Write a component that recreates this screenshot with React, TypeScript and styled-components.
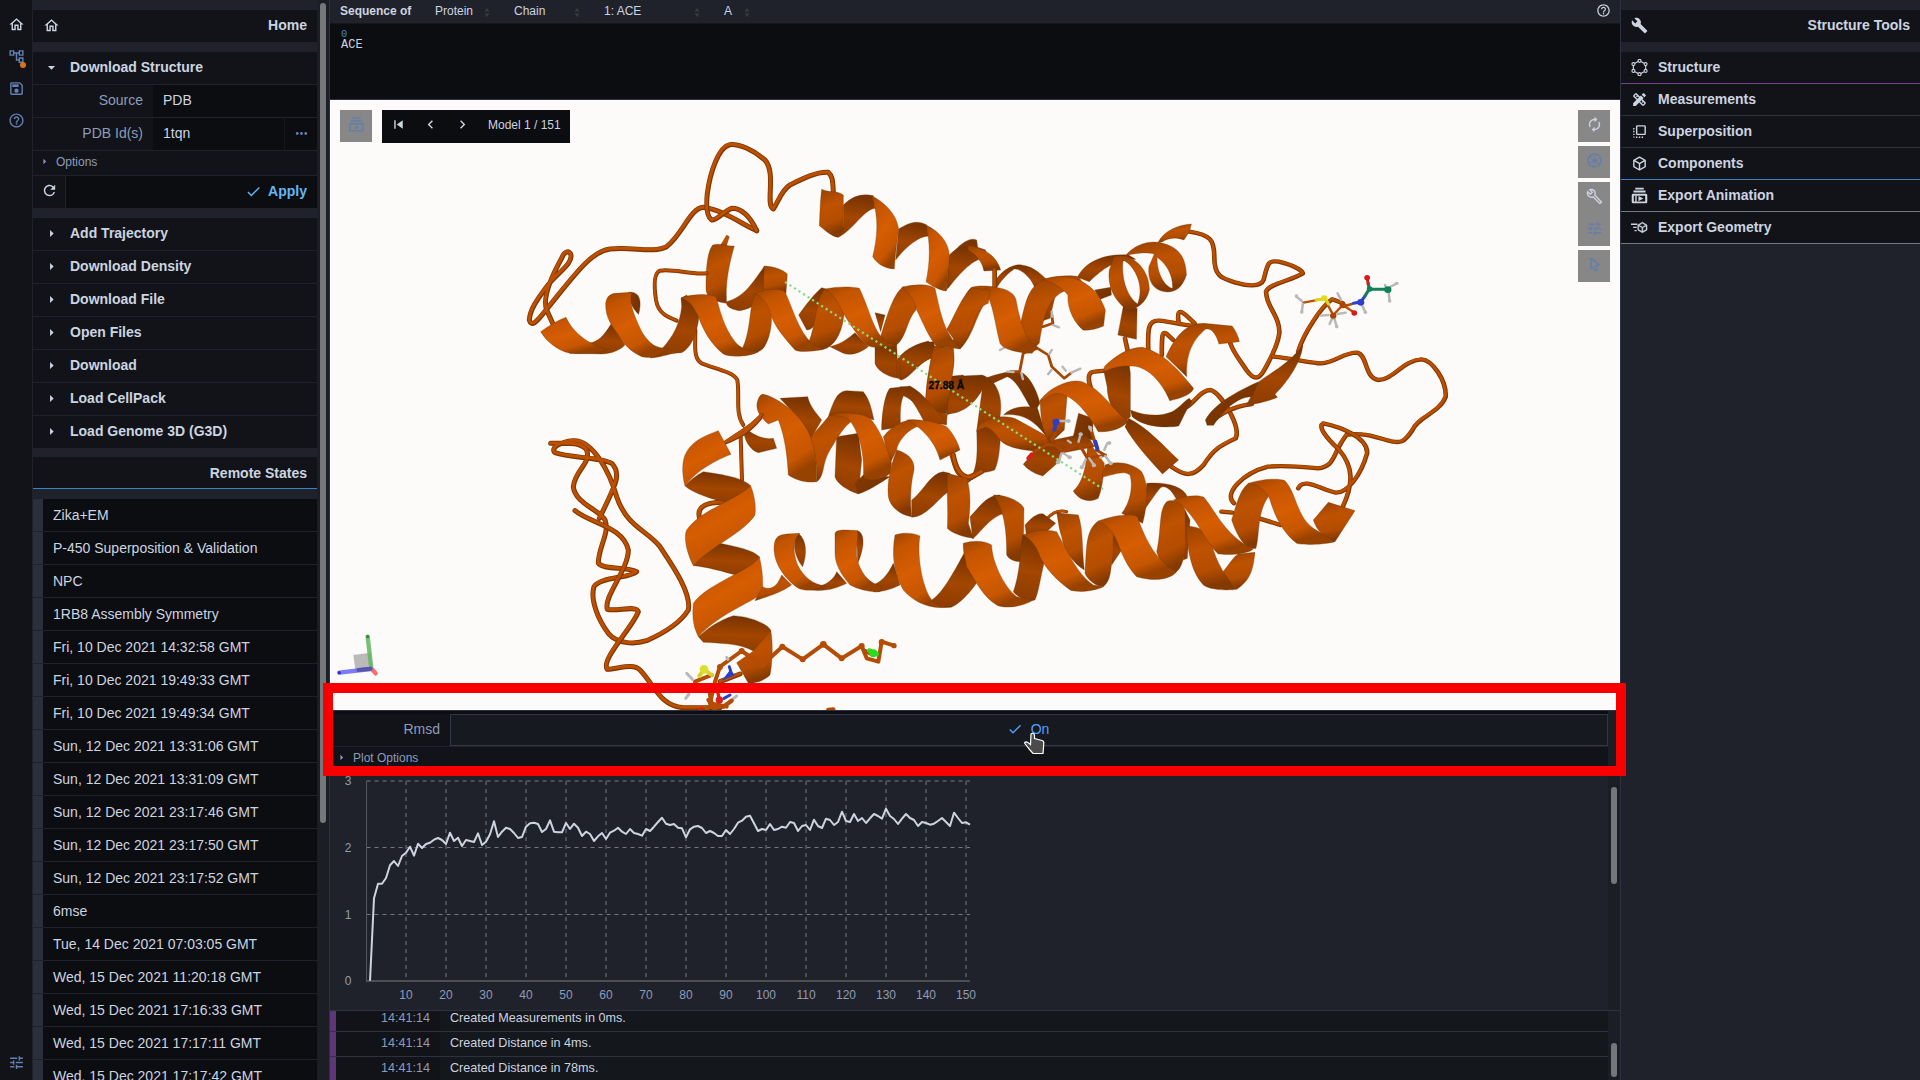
import React from "react";
import styled, { createGlobalStyle } from "styled-components";
import {
  MdOutlineHome, MdOutlineAccountTree, MdOutlineSave, MdHelpOutline, MdTune, MdArrowRight, MdArrowDropDown,
  MdMoreHoriz, MdRefresh, MdCheck, MdSkipPrevious, MdNavigateBefore, MdNavigateNext, MdAutorenew,
  MdOutlineCamera, MdBuild, MdOutlineBuild, MdOutlineSubscriptions, MdDesignServices, MdFlipToFront,
} from "react-icons/md";

const c = {
  gap: "#20222b", panel: "#111318", black: "#0c0d11", text: "#ccd4e0", muted: "#8c9cba", icon: "#6280b0",
  blue: "#51a2fb", line: "#2d3141", log: "#14171b", canvas: "#fcfbf9",
};

const Global = createGlobalStyle`
  * { box-sizing: border-box; }
  body { margin: 0; overflow: hidden; background: ${c.gap}; color: ${c.text};
    font: 14px/32px "Liberation Sans", Arial, sans-serif; }
  svg { display: block; flex: none; }
`;
const Shell = styled.div`
  position: relative; display: grid; grid-template-columns: 33px 296px 1292px 299px;
  width: 1920px; height: 1080px; overflow: hidden;
`;
const Rail = styled.nav`
  display: flex; flex-direction: column; align-items: center; padding: 8px 0 2px; background: ${c.panel};
  border-right: 1px solid ${c.gap}; color: ${c.icon}; font-size: 17px;
`;
const RailItem = styled.div<{ $active?: boolean; $last?: boolean }>`
  position: relative; display: grid; place-items: center; width: 32px; height: 32px;
  color: ${p => (p.$active ? c.text : "inherit")}; margin-top: ${p => (p.$last ? "auto" : 0)};
`;
const Dot = styled.i`
  position: absolute; right: 6px; bottom: 4px; width: 6px; height: 6px; border-radius: 50%; background: #d8741c;
`;
const Left = styled.aside`
  display: flex; height: 1080px; overflow: hidden; background: #1b1e25;
`;
const LeftBody = styled.div`width: 284px; padding-top: 10px; background: ${c.gap};`;
const LeftScroll = styled.div`padding: 3px 0 0 3px; width: 12px;`;
const Thumb = styled.div<{ $h: number }>`width: 6px; height: ${p => p.$h}px; border-radius: 3px; background: #76777b;`;
const Header = styled.header<{ $line?: string }>`
  display: flex; align-items: center; justify-content: space-between; height: 32px;
  padding: 0 10px ${p => (p.$line ? 0 : 2)}px 10px;
  margin-bottom: 10px; background: ${c.panel}; font-weight: bold; border-bottom: ${p => (p.$line ? `1px solid ${p.$line}` : 0)};
  & > span { margin-left: auto; }
`;
const Expander = styled.div`
  display: flex; align-items: center; gap: 10px; height: 32px; margin-bottom: 1px; padding: 0 0 2px 10px;
  background: ${c.panel}; font-weight: bold;
`;
const Field = styled.div`display: flex; height: 32px; margin-bottom: 1px; background: ${c.black};`;
const Label = styled.div`
  width: 120px; padding-right: 10px; text-align: right; line-height: 30px; color: ${c.muted}; background: ${c.panel};
`;
const Value = styled.div`flex: 1; padding-left: 10px; line-height: 30px;`;
const More = styled.div`
  display: grid; place-items: center; width: 33px; padding-bottom: 2px; border-left: 1px solid #15171c; color: ${c.icon};
  font-size: 17px;
`;
const OptionRow = styled.div`
  display: flex; align-items: center; gap: 5px; height: 24px; margin-bottom: 1px; padding: 0 0 3px 5px; font-size: 12px;
  background: ${c.panel}; color: ${c.muted};
`;
const ApplyRow = styled.div`
  display: flex; height: 32px; margin-bottom: 10px; background: ${c.black}; font-weight: bold; color: #64b5f6;
`;
const Reload = styled.div`
  display: grid; place-items: center; width: 33px; padding-bottom: 3px; color: ${c.text}; background: ${c.panel};
  border-right: 1px solid ${c.gap}; font-size: 17px;
`;
const ApplyButton = styled.div`
  display: flex; flex: 1; gap: 6px; align-items: center; justify-content: flex-end; padding: 0 10px 2px 0;
`;
const Group = styled.div`margin-bottom: 9px;`;
const StateRow = styled.div`
  height: 32px; margin-bottom: 1px; padding-left: 10px; line-height: 32px; border-left: 10px solid #29303c; background: ${c.black};
  & > span { display: block; height: 32px; line-height: 33px; }
`;

const Center = styled.main`
  display: grid; grid-template-rows: 24px 75px 611px 300px 70px; width: 1292px; height: 1080px;
  border-left: 1px solid ${c.line}; border-right: 1px solid ${c.line};
`;
const SeqBar = styled.div`
  display: grid; grid-template-columns: 95px 79px 90px 120px 50px 1fr; align-items: center; padding: 0 0 2px 10px; height: 24px;
  line-height: 20px; font-size: 12px; background: ${c.gap}; border-bottom: 1px solid #15171c;
`;
const Pick = styled.div`
  display: flex; align-items: center; justify-content: space-between; padding-right: 24px;
  & > svg { margin-top: 3px; }
`;
const SeqHelp = styled.div`justify-self: end; padding: 0 9px 1px 0; font-size: 15px;`;
const Sequence = styled.div`
  padding: 5px 11px; font: 12px/11px "Liberation Mono", monospace; background: ${c.black};
  & > b { display: block; font-size: 10.5px; font-weight: normal; color: #4a83c8; }
`;
const Viewport = styled.section`
  position: relative; height: 611px; overflow: hidden; background: ${c.canvas}; border-top: 1px solid ${c.line};
`;
const TopLeft = styled.div`position: absolute; left: 10px; top: 10px; display: flex; align-items: flex-start; gap: 10px;`;
const Tile = styled.div<{ $bright?: boolean }>`
  display: grid; place-items: center; width: 32px; height: 32px; background: #878787; font-size: 17px; padding-bottom: 3px;
  color: ${p => (p.$bright ? "#ccd2dc" : "#637ea9")};
`;
const Player = styled.div`
  display: flex; height: 33px; width: 188px; background: ${c.black}; font-size: 17px;
  & > span { font-size: 12px; padding-left: 10px; line-height: 31px; }
`;
const PlayerKey = styled.div`display: grid; place-items: center; width: 32px; height: 29px;`;
const TopRight = styled.div`position: absolute; right: 10px; top: 10px; display: flex; flex-direction: column; gap: 4px;`;
const Scene = styled.svg`position: absolute; left: 0; top: 0;`;

const PlotPanel = styled.section`
  display: flex; height: 300px; background: #1b1e25; border-top: 1px solid ${c.line};
`;
const PlotBody = styled.div`width: 1278px; background: ${c.gap};`;
const Rmsd = styled.div`display: flex; height: 36px; padding-top: 3px; background: ${c.black}; border-bottom: 1px solid ${c.gap};`;
const Toggle = styled.div`
  display: flex; align-items: center; justify-content: center; gap: 8px; flex: 1; padding: 0 2px 3px 0; color: ${c.blue};
  border: 1px solid #303747; background: #161920; font-size: 14px;
`;
const LogPanel = styled.section`
  display: flex; height: 70px; overflow: hidden; background: #1b1e25; border-top: 1px solid ${c.line};
`;
const LogBody = styled.div`width: 1278px; font-size: 12.6px; line-height: 22px;`;
const LogRow = styled.div<{ $cut?: boolean }>`
  display: grid; grid-template-columns: 110px 1fr; height: ${p => (p.$cut ? 21 : 25)}px; overflow: hidden;
  border-bottom: 1px solid ${c.line}; background: ${c.log};
  & > * { margin-top: ${p => (p.$cut ? -4 : 0)}px; }
`;
const Time = styled.span`
  border-left: 6px solid #5f3579; padding-right: 10px; text-align: right; color: ${c.muted}; background: ${c.panel};
`;
const Message = styled.span`padding-left: 10px;`;
const Bar = styled.div<{ $top: number }>`padding: ${p => p.$top}px 0 0 3px;`;

const Right = styled.aside`padding-top: 10px; background: ${c.gap}; font-size: 14px;`;
const Tool = styled.div<{ $line: string }>`
  display: flex; align-items: center; gap: 10px; height: 32px; padding-left: 10px; font-weight: bold; line-height: 31px;
  background: ${c.panel}; border-bottom: 1px solid ${p => p.$line};
`;
const Highlight = styled.div`
  position: absolute; left: 323px; top: 683px; width: 1303px; height: 93px; border: 10px solid #f80000;
`;
const Cursor = styled.svg`position: absolute; left: 1023px; top: 732px;`;

/* ---------- molecule ---------- */
type Ribbon = [tone: "f" | "m" | "b" | "d", d: string];

const upperBack: Ribbon[] = [
  ["b", "M1000,225C1030,195 1060,190 1090,197L1095,235C1060,240 1030,300 985,322L1000,290Z"],
  ["b", "M1166,297C1200,275 1225,270 1250,285L1255,318C1220,320 1180,360 1157,390Z"],
  ["b", "M1318,380C1350,340 1380,320 1400,330L1405,365C1370,375 1340,430 1308,483Z"],
  ["b", "M650,515C700,500 720,470 762,410L765,480C760,510 730,535 690,542C670,540 645,530 650,515Z"],
  ["m", "M762,408C790,408 820,420 832,432L828,490L760,480Z"],
  ["m", "M632,345L650,315L658,320L648,352Z"],
  ["m", "M608,345C630,338 650,350 673,348C658,400 645,460 650,520C610,515 590,500 588,480C588,420 590,370 608,345Z"],
  ["b", "M866,555C890,520 915,490 935,473L960,480L925,570C910,590 905,600 890,600Z"],
  ["b", "M960,650C1000,640 1020,620 1035,608L1075,650C1050,670 1020,678 1000,670Z"],
  ["b", "M1095,548L1125,555L1112,605Z"],
  ["b", "M1095,650L1160,645L1165,745C1130,740 1100,720 1095,700Z"],
  ["b", "M1160,690C1190,650 1230,640 1255,633L1285,675C1230,690 1205,740 1175,750L1160,742Z"],
  ["b", "M1310,740L1360,735L1360,835L1310,855Z"],
  ["m", "M1272,648L1325,655C1340,690 1330,720 1310,780L1305,850C1280,845 1255,830 1248,815C1245,760 1262,700 1272,648Z"],
];
const upperFront: Ribbon[] = [
  ["m", "M935,178C960,190 980,180 1000,195L1000,300L985,322C965,320 945,300 928,287C930,250 930,220 935,178Z"],
  ["f", "M1085,197C1120,215 1160,250 1166,297C1160,340 1155,380 1153,417C1125,415 1105,405 1088,380C1100,330 1110,270 1085,197Z"],
  ["f", "M1248,285C1290,305 1320,340 1318,385L1308,483C1285,480 1262,465 1248,455C1260,400 1262,340 1248,285Z"],
  ["b", "M235,640C275,635 290,600 305,580L345,645C330,660 310,670 275,672L180,670Z"],
  ["f", "M92,605C120,585 145,570 168,562C185,600 220,630 255,645L290,660C260,672 200,672 180,670C140,660 110,635 92,605Z"],
  ["d", "M355,487C385,483 398,505 386,553C370,540 355,510 355,487Z"],
  ["b", "M455,657C490,620 510,580 515,530L513,505L530,495L567,560C560,620 540,655 515,668C480,668 465,680 420,684Z"],
  ["f", "M287,520C290,500 300,492 315,490L365,487C355,520 378,570 398,610C425,650 445,655 475,655C450,682 420,686 395,680C355,660 345,645 330,620C305,590 285,560 287,520Z"],
  ["m", "M695,660C725,600 715,540 735,490L780,510C790,560 785,620 760,655C740,672 720,675 700,675Z"],
  ["f", "M513,503C545,492 600,490 618,500C630,540 640,590 675,635C690,655 720,665 745,665C720,680 660,683 640,672C600,640 580,600 565,560C555,530 540,515 513,503Z"],
  ["m", "M895,640C920,580 915,520 942,478L975,480L1003,540C1000,600 980,640 950,655C930,662 910,662 900,655Z"],
  ["f", "M735,490C770,475 810,475 825,485C850,540 865,600 905,640L940,658C905,665 870,668 855,660C820,620 795,590 785,560C775,530 765,505 735,490Z"],
  ["m", "M1112,620C1130,560 1150,490 1180,470L1220,480L1218,540C1190,570 1190,620 1160,645L1130,650Z"],
  ["f", "M942,478C985,468 1030,470 1048,475C1080,540 1090,610 1135,640L1160,648C1110,652 1085,655 1070,645C1030,600 1010,570 990,530C975,500 960,485 942,478Z"],
  ["m", "M1310,598C1340,550 1360,480 1395,475L1440,480L1435,520C1395,530 1390,610 1350,655Z"],
  ["f", "M1175,472C1220,460 1260,463 1275,475C1290,540 1300,610 1352,655L1280,650C1255,620 1240,580 1220,540C1215,510 1195,485 1175,472Z"],
];
const lowerCluster: Ribbon[] = [
  ["b", "M700,890C730,915 760,930 790,925L800,955L745,968C720,960 700,930 700,890Z"],
  ["b", "M810,805L893,800C900,830 920,850 935,870L900,930L870,870Z"],
  ["b", "M955,860C975,800 985,785 1010,782L1060,785C1080,810 1085,840 1092,870L1060,860L1020,855Z"],
  ["b", "M980,920L1045,910L1055,990L1045,1092C1010,1080 980,1060 975,1040Z"],
  ["d", "M1045,1092C1080,1080 1100,1065 1140,1040L1060,1035L1035,1060Z"],
  ["b", "M1115,900C1115,850 1125,790 1140,775L1200,768C1240,790 1270,830 1310,880L1250,890C1220,830 1200,800 1185,790C1170,810 1170,850 1172,890Z"],
  ["m", "M920,1055C945,1040 935,1000 960,960C985,920 1000,890 1030,870L1020,850C990,845 965,850 955,860C930,890 910,910 900,925C915,960 922,1010 920,1055Z"],
  ["f", "M760,793C790,797 880,850 905,930C920,980 920,1020 920,1055C890,1060 855,1050 835,1035C832,980 825,920 805,870L775,882C750,860 736,840 742,815C748,798 752,793 760,793Z"],
  ["m", "M1120,920C1150,880 1190,868 1215,870L1240,885C1200,890 1165,930 1160,960L1140,1000Z"],
  ["f", "M960,855C1000,843 1060,850 1080,865C1110,900 1130,950 1145,1000L1140,1030C1120,1050 1080,1055 1060,1045C1065,980 1050,900 1010,862Z"],
  ["f", "M1190,870C1240,865 1290,880 1310,890C1330,910 1345,940 1350,960L1290,990C1280,950 1250,900 1190,870Z"],
];
const rightBack: Ribbon[] = [
  ["b", "M138,165C160,140 190,130 240,150L232,175C200,180 160,230 135,265Z"],
  ["m", "M190,137C230,140 270,165 282,210L235,213C230,185 215,165 190,150Z"],
  ["b", "M262,262C270,215 320,190 340,195C380,200 400,230 418,245L380,275C375,240 340,205 320,207C295,225 282,245 270,265Z"],
  ["d", "M545,270L590,262L592,285L560,298Z"],
  ["b", "M625,320L664,325L662,418L610,405Z"],
  ["b", "M403,300L440,260L420,355L400,362Z"],
  ["b", "M497,232C520,180 580,160 640,165L660,178C600,180 570,205 530,245Z"],
  ["b", "M0,470C30,440 60,425 95,425L100,470C60,480 30,520 0,540Z"],
  ["b", "M0,560C40,560 55,580 75,615L132,645L130,675L80,662C50,620 30,590 0,585Z"],
  ["d", "M230,540C290,510 330,515 345,520C370,540 385,580 392,610L375,640C350,600 330,540 300,530L240,560Z"],
  ["b", "M135,530L230,525C270,540 290,590 280,650L215,690L230,570C200,630 150,645 132,640Z"],
  ["d", "M290,645C310,620 350,615 385,625L410,710C370,650 330,640 290,645Z"],
  ["m", "M95,440L150,445C155,500 140,560 130,642C100,635 80,620 70,605C80,550 80,490 95,440Z"],
  ["b", "M215,690L285,660C280,720 280,780 265,810C240,820 220,818 205,820C220,780 215,730 215,690Z"],
  ["m", "M215,695C220,650 300,640 330,660L445,728L400,755C350,752 300,745 280,720C260,690 240,665 215,695Z"],
  ["b", "M385,745L475,715L440,790L400,828C370,820 355,805 345,793Z"],
  ["d", "M500,640L540,655L540,720L485,710Z"],
  ["m", "M525,720L572,790C570,830 565,870 555,895C530,910 500,900 485,873C510,850 525,800 525,720Z"],
  ["b", "M430,720L520,700L545,740L450,760Z"],
];
const rightFront: Ribbon[] = [
  ["m", "M150,420C170,350 170,290 200,262C220,255 255,258 265,262L268,290C220,290 215,400 168,447L130,440Z"],
  ["m", "M325,420C350,340 345,270 400,240C440,225 480,225 500,230L520,262C420,260 405,330 390,430L360,460Z"],
  ["f", "M250,260C290,262 320,275 325,300C335,360 350,420 385,440L370,460C330,458 290,450 280,430C265,370 262,310 235,268Z"],
  ["f", "M400,240C440,220 540,220 575,330L570,378C550,388 525,392 512,390C490,370 468,330 470,285C450,258 420,245 400,240Z"],
  ["m", "M600,170C650,155 700,210 698,270C690,310 660,330 635,330C600,300 580,260 586,210ZM625,180C618,230 635,290 665,312C685,260 660,200 625,180Z"],
  ["m", "M630,168C660,130 700,122 730,128C780,140 800,170 802,225C790,265 770,275 750,276C715,275 692,250 697,200L712,162C690,155 650,160 630,168ZM720,172C718,215 740,260 763,265C765,225 745,190 720,172Z"],
  ["m", "M722,128C740,90 780,75 816,72L810,95L795,120C770,110 750,115 735,125Z"],
  ["m", "M745,470C770,410 800,370 850,370L930,378C945,400 950,420 950,425L893,432C885,400 870,382 855,388C820,420 800,460 803,530Z"],
  ["b", "M570,510L640,480L645,520L645,650L625,670C600,650 580,600 580,560Z"],
  ["f", "M572,500C600,470 640,440 680,442C740,460 780,510 822,565C820,580 790,595 755,602C740,560 700,500 650,498C620,497 600,500 572,515Z"],
  ["m", "M392,600L470,560L460,690L420,730C395,690 395,650 392,600Z"],
  ["f", "M395,598C420,560 480,535 510,545C570,570 600,640 640,662C620,690 580,697 555,695C520,630 480,580 435,580Z"],
  ["d", "M645,630C700,655 750,645 770,630C790,615 800,600 810,595L818,605C800,630 790,660 780,678C740,685 680,680 650,650Z"],
  ["b", "M640,655C690,680 740,740 780,780L735,822C690,770 650,720 630,680Z"],
  ["b", "M1128,435C1125,480 1090,540 1050,583L1057,592C1035,602 1000,612 970,615L1005,545C1050,510 1090,490 1128,435Z"],
  ["d", "M855,660C880,610 950,570 1005,545L985,590C940,590 900,640 878,676L860,676Z"],
];
const verticalHelix: Ribbon[] = [
  ["b", "M550,155C620,165 670,175 692,197C680,225 650,240 625,248C580,240 520,220 495,198C510,180 530,165 550,155Z"],
  ["f", "M595,32L633,103C590,120 530,150 495,198C485,160 485,120 500,95C520,60 560,45 595,32Z"],
  ["b", "M592,368C650,380 700,390 718,410C715,440 690,460 655,467C610,455 560,440 520,437C540,410 570,385 592,368Z"],
  ["f", "M692,197C705,230 708,260 705,285C670,340 570,380 520,437C500,400 490,350 500,330C540,270 650,240 692,197Z"],
  ["b", "M640,587C690,590 740,610 752,630C750,660 730,680 700,693C660,670 600,670 550,667L535,650C570,620 600,600 640,587Z"],
  ["f", "M718,410C728,450 730,490 727,520C690,550 600,580 535,650C515,610 518,580 520,550C560,490 700,450 718,410Z"],
  ["m", "M752,630C760,670 757,730 750,765C730,785 700,790 685,790L650,728L700,693Z"],
  ["b", "M1175,240C1210,215 1230,160 1270,155L1290,160L1285,215C1250,240 1220,290 1175,292Z"],
  ["m", "M1130,90C1165,100 1185,120 1182,150C1170,200 1170,250 1175,290C1140,285 1110,260 1105,230C1100,180 1115,130 1130,90Z"],
  ["m", "M1282,160L1340,175C1355,220 1350,270 1345,310L1360,355C1320,350 1290,335 1282,325C1285,270 1280,220 1282,160Z"],
  ["m", "M727,500C760,515 775,490 785,465L815,495C780,520 740,530 705,542Z"],
  ["b", "M895,500C930,490 945,470 950,455L980,490C950,505 920,515 870,510Z"],
  ["b", "M1050,497C1090,490 1110,450 1120,430L1140,495C1110,510 1080,517 1060,515Z"],
  ["b", "M835,340C860,360 862,400 848,440C830,420 810,370 835,340Z"],
  ["f", "M762,390C762,350 775,345 800,342L840,340C815,360 820,400 833,435C850,470 880,495 915,497C880,515 850,512 835,505C800,480 765,440 762,390Z"],
  ["b", "M1010,332C1035,335 1035,380 1013,430Z"],
  ["f", "M945,340C950,330 960,328 1013,332C1015,370 1003,400 1015,430C1030,470 1050,490 1085,498L1080,515C1050,517 1020,510 990,495C960,460 945,430 945,400Z"],
];
const bottomHelix: Ribbon[] = [
  ["b", "M210,290C240,260 260,225 300,225L315,280C270,290 240,340 218,357Z"],
  ["m", "M280,225C330,225 365,250 372,265C370,320 375,370 360,425C340,425 325,415 320,405C320,340 315,270 280,225Z"],
  ["b", "M375,315C400,285 420,278 430,282L467,310L440,335L380,350Z"],
  ["m", "M470,278L535,285C550,330 545,380 553,450C520,430 490,390 485,350C475,320 475,300 470,278Z"],
  ["b", "M740,190C800,185 850,200 862,230L830,240C810,200 790,195 780,205C760,230 740,260 730,275Z"],
  ["m", "M615,135C650,120 700,130 725,155C745,190 745,240 728,310L665,280C690,250 700,200 690,165C670,150 640,165 605,172Z"],
  ["b", "M640,340L665,390L635,435Z"],
  ["b", "M855,270L870,300L862,415L850,420Z"],
  ["b", "M95,540C130,520 170,440 192,400L232,485C210,520 170,560 150,562L100,560Z"],
  ["f", "M-15,345C10,335 45,340 60,348C50,400 65,500 95,540C110,555 130,562 155,560C90,572 40,545 10,510C-20,460 -25,400 -15,345Z"],
  ["b", "M340,515C360,460 360,400 368,345L420,345L432,430C420,480 415,520 405,540C380,545 350,530 340,515Z"],
  ["f", "M190,370C220,360 255,362 275,375C275,420 310,500 350,530L400,540C370,560 310,568 290,555C250,530 230,490 200,440C195,410 188,390 190,370Z"],
  ["m", "M555,460C560,390 555,330 595,303L640,320L640,400C630,450 635,480 610,500C585,500 560,475 555,460Z"],
  ["f", "M370,345C410,325 450,330 470,335C500,390 530,460 580,495L610,500C580,515 530,518 510,510C470,480 440,450 420,410C410,380 395,360 370,345Z"],
  ["m", "M770,395C785,330 775,270 800,245C820,235 850,250 855,270L857,380C850,430 840,450 825,458C800,450 780,430 770,395Z"],
  ["f", "M595,303C640,285 700,280 712,290C730,340 760,420 830,455C810,480 760,485 710,470C680,440 665,400 650,360C640,335 620,315 595,303Z"],
  ["m", "M965,460C990,430 1000,410 1015,402L1065,397C1060,440 1055,480 1010,508Z"],
  ["m", "M858,318C890,320 920,330 925,345C945,400 950,440 1010,508C980,512 930,510 910,495C880,460 865,420 858,318Z"],
  ["m", "M995,300C1010,250 1020,210 1045,190L1100,195L1105,230C1070,280 1080,340 1068,385C1040,390 1015,360 995,300Z"],
  ["f", "M820,240C860,225 900,225 912,232C950,280 980,350 1060,387C1040,405 980,405 955,402C930,380 910,340 890,310C870,280 850,255 820,240Z"],
  ["m", "M1240,300L1285,247L1365,272L1305,365C1270,355 1250,330 1240,300Z"],
  ["f", "M1045,190C1090,175 1140,175 1155,182C1190,220 1190,290 1240,325L1305,365C1270,375 1200,375 1190,370C1150,340 1125,290 1110,240C1100,215 1080,195 1045,190Z"],
];

const upperCoils = [
  "M740,302C700,285 640,240 580,232C540,235 520,310 470,350C430,370 370,350 300,357C240,365 190,440 100,550C80,575 64,592 58,570C60,540 80,510 110,470C140,430 192,400 182,372C175,360 162,365 155,385C130,430 95,500 110,540L128,580",
  "M740,302C725,270 700,235 665,235C640,245 620,272 605,270C590,260 588,230 592,190C600,130 625,50 660,44C690,42 730,60 765,90C800,130 765,225 790,237C805,215 815,180 840,165C880,145 920,125 955,127C970,140 968,160 970,185",
  "M590,430C540,435 490,415 450,422C430,430 432,470 438,510C445,550 470,560 500,572",
  "M556,600C556,650 550,685 575,700C610,715 670,725 682,750C690,800 675,850 700,885M692,920L696,1050",
  "M645,938C700,915 720,900 750,865M640,942C690,905 720,895 755,855",
];
const rightCoils = [
  "M810,95C870,105 880,120 880,170C880,230 900,235 940,248C970,258 1010,262 1018,240C1030,190 1030,180 1060,185C1100,195 1125,210 1128,220C1090,245 1035,250 1025,275C1025,320 1065,350 1062,400C1058,440 1035,480 1020,510C1005,540 990,540 970,510C945,470 935,460 925,430",
  "M695,450C695,400 690,360 725,362C760,365 790,375 825,378M780,365C775,330 785,330 800,345L825,370M733,465C733,400 735,395 745,400L765,420",
  "M540,580C520,530 530,515 545,515L575,512M265,210L265,262M630,415L637,450",
  "M760,800C800,830 820,830 850,795C880,745 900,735 940,715C955,680 900,580 870,570C845,570 830,600 805,620",
  "M1115,455C1130,400 1180,320 1210,298L1240,310M868,668C900,640 930,620 985,612",
  "M1045,470C1100,475 1150,490 1180,490C1220,488 1240,458 1280,458C1310,465 1300,535 1340,540C1380,540 1410,480 1460,478C1490,480 1530,540 1528,590C1510,640 1450,650 1435,690C1410,730 1400,728 1380,725C1340,715 1300,695 1250,705C1210,760 1220,800 1170,805C1120,800 1080,795 1030,800C960,820 905,880 935,910",
  "M1240,920C1270,850 1270,800 1230,750C1190,710 1170,680 1185,670C1230,680 1310,710 1308,760C1290,830 1250,880 1220,878C1180,870 1130,830 1115,865M900,935L930,938M1005,955L1065,975",
  "M145,765C155,800 160,835 190,832L225,815M185,845L215,820",
];
const leftCoils = [
  "M92,70C140,70 180,65 200,90C215,130 165,150 160,200C165,250 240,270 255,300C270,340 235,380 235,430C250,450 320,440 350,455C330,475 240,470 222,500C210,540 235,600 265,640C290,670 340,675 380,662C430,640 480,610 505,570C515,520 460,440 420,380C380,330 320,320 290,230C270,160 220,60 160,62C120,65 90,85 105,98C150,115 240,110 275,130C305,160 290,190 238,295",
  "M165,272C210,310 310,320 325,390C325,450 250,530 262,568C290,575 350,555 355,575C340,620 240,720 262,748C300,745 340,730 360,750C400,790 420,860 490,863L600,863",
  "M540,298C530,270 540,245 620,247M600,785L660,762M1300,105C1310,160 1330,175 1355,172L1385,155",
];

const tone = { f: "url(#ribbonFront)", m: "url(#ribbonMid)", b: "url(#ribbonBack)", d: "url(#ribbonDark)" };
const Ribbons = ({ items }: { items: Ribbon[] }) => (
  <g stroke="#6a3108" strokeWidth="1.4" strokeOpacity=".65" fillRule="evenodd">
    {items.map(([t, d]) => <path key={d} d={d} fill={tone[t]} />)}
  </g>
);
const Coils = ({ items, w = 12 }: { items: string[]; w?: number }) => (
  <g fill="none" strokeLinecap="round" strokeLinejoin="round">
    {items.map(d => (
      <g key={d}>
        <path d={d} stroke="#803700" strokeWidth={w} />
        <path d={d} stroke="#bd4f00" strokeWidth={w * 0.6} transform="translate(-.8 -1)" />
      </g>
    ))}
  </g>
);
const Sticks = ({ d, color = "#b54c05", w = 8 }: { d: string; color?: string; w?: number }) => (
  <path d={d} stroke={color} strokeWidth={w} fill="none" strokeLinecap="round" strokeLinejoin="round" />
);
type Atom = [number, number, number, string];
const Atoms = ({ items }: { items: Atom[] }) => (
  <>{items.map(([x, y, r, f]) => <circle key={`${x}-${y}`} cx={x} cy={y} r={r} fill={f} />)}</>
);
const H = "#b9b8b8";

const frame = {
  upper: "translate(510 130) scale(.33333)",
  right: "translate(900 200) scale(.35714 .33333)",
  left: "translate(520 420) scale(.33333)",
  bottom: "translate(900 420) scale(.33333)",
  axes: "translate(0 440) scale(.33333)",
};

const Molecule = () => (
  <Scene width="1290" height="610" viewBox="330 100 1290 610">
    <defs>
      <linearGradient id="ribbonFront" x1="0" y1="0" x2=".45" y2="1">
        <stop offset="0" stopColor="#9a4300" /><stop offset=".2" stopColor="#c45400" />
        <stop offset=".55" stopColor="#d65d02" /><stop offset=".85" stopColor="#c65600" /><stop offset="1" stopColor="#984200" />
      </linearGradient>
      <linearGradient id="ribbonMid" x1="0" y1="0" x2=".2" y2="1">
        <stop offset="0" stopColor="#974200" /><stop offset=".4" stopColor="#be5200" />
        <stop offset=".75" stopColor="#b44d00" /><stop offset="1" stopColor="#833900" />
      </linearGradient>
      <linearGradient id="ribbonBack" x1=".1" y1="0" x2="0" y2="1">
        <stop offset="0" stopColor="#793400" /><stop offset=".5" stopColor="#a34600" /><stop offset="1" stopColor="#8b3c00" />
      </linearGradient>
      <linearGradient id="ribbonDark" x1="0" y1="0" x2="1" y2="1">
        <stop offset="0" stopColor="#873a00" /><stop offset="1" stopColor="#6e3000" />
      </linearGradient>
    </defs>
    <g transform={frame.upper}><Ribbons items={upperBack} /><Coils items={upperCoils.slice(2, 4)} w={12} /></g>
    <g transform={frame.right}>
      <Ribbons items={rightBack} />
      <Coils items={rightCoils} w={13} />
      <Sticks d="M400,380L428,370L425,345M345,460L335,515L310,515M345,460L385,445L415,465L425,500L460,535L478,520" color="#a54705" w={8} />
      <Sticks d="M425,335L426,350M428,375L445,382M280,450L292,443M300,515L318,516M340,520L344,537M425,450L418,462M415,522L424,510M455,500L464,512M480,518L505,506" color={H} w={7} />
      <Ribbons items={rightFront} />
    </g>
    <g transform={frame.upper}>
      <Coils items={[upperCoils[0], upperCoils[1]]} w={15} />
      <Ribbons items={upperFront} /><Ribbons items={lowerCluster} />
      <Coils items={[upperCoils[4]]} w={12} />
    </g>
    <g transform={frame.left}><Coils items={leftCoils} w={15} /><Ribbons items={verticalHelix} /></g>
    <g transform={frame.bottom}><Coils items={["M440,297C460,275 480,270 500,275"]} w={9} /><Ribbons items={bottomHelix} /></g>

    <g transform={frame.right}>
      <Sticks d="M1130,308L1188,296M1240,315L1213,345L1195,310M1240,315L1272,338" color="#bd4d03" w={7} />
      <Sticks d="M1165,300L1190,296L1200,312" color="#d8d51c" w={9} />
      <Sticks d="M1110,290L1125,303M1128,312L1125,336M1225,280L1235,300M1178,347L1200,345M1225,342L1248,338M1203,372L1210,355M1216,355L1223,380M1292,312L1303,337M1370,262L1393,250M1368,275L1371,303M1358,255L1362,265" color={H} w={7} />
      <Sticks d="M1245,318L1265,312" color="#b54c05" w={8} />
      <Sticks d="M1270,310L1290,306L1302,288" color="#2b3fd0" w={9} />
      <Sticks d="M1302,288L1314,267L1365,268M1314,267L1311,250" color="#12805b" w={9} />
      <Sticks d="M1311,252L1308,235" color="#d81b1b" w={8} />
      <Atoms items={[[1308, 233, 8, "#d91a1a"], [1272, 339, 8, "#d91a1a"], [1290, 307, 10, "#2b3fd0"], [1188, 295, 9, "#dedb20"], [1315, 267, 8, "#12805b"], [1366, 269, 10, "#12805b"], [1213, 347, 9, "#a84604"], [1240, 316, 9, "#a84604"], [1390, 250, 5, H], [1371, 303, 5, H], [1303, 337, 5, H], [1110, 288, 5, H], [1125, 336, 5, H], [1223, 380, 5, H]]} />
      <Sticks d="M375,755L410,735L435,735L455,755L500,730L525,775L575,765M435,700L425,720M535,690L548,735M550,750L573,765" color="#a64604" w={9} />
      <Sticks d="M437,665L432,690M547,725L553,748" color="#2c3fbe" w={11} />
      <Sticks d="M445,663L472,663M505,705L500,725M530,680L535,692M580,730L572,750M445,787L452,760M458,760L475,772M510,802L520,778M530,775L543,795M575,768L590,790M470,722L478,728" color={H} w={7} />
      <Sticks d="M360,775L369,764" color="#d6201c" w={13} />
      <Atoms items={[[437, 666, 10, "#2c3fbe"], [472, 663, 6, H], [475, 772, 6, H], [442, 787, 6, H], [506, 703, 6, H], [533, 684, 6, H], [586, 729, 6, H], [543, 796, 6, H], [509, 802, 6, H], [590, 790, 6, H], [563, 772, 5, H]]} />
    </g>

    <g transform={frame.left}>
      <Sticks d="M585,785L600,740L665,693L727,735L787,680L848,718L910,673L965,715L1025,678L1040,715L1075,725L1085,665L1122,677M1030,690L1060,705M525,785L575,765M585,785L570,850L620,860M565,840L585,870" w={12} />
      <Atoms items={[[600, 741, 9, "#b54c05"], [665, 693, 9, "#b54c05"], [727, 735, 9, "#b54c05"], [787, 680, 9, "#b54c05"], [848, 718, 9, "#b54c05"], [910, 673, 10, "#b54c05"], [965, 715, 9, "#b54c05"], [1025, 678, 9, "#b54c05"], [1085, 666, 9, "#b54c05"], [1122, 677, 8, "#b54c05"]]} />
      <Sticks d="M1048,692L1070,702" color="#28dd1c" w={14} />
      <circle cx="1060" cy="700" r="12" fill="#28dd1c" />
      <Sticks d="M538,768L552,748L575,765" color="#d9d22a" w={12} /><circle cx="552" cy="748" r="13" fill="#dfdc30" />
      <path d="M605,782L630,750L645,765Z" fill="#2b3fc9" />
      <Sticks d="M628,740L634,760M612,835L630,825" color="#2b3fc9" w={9} />
      <Sticks d="M500,760L517,778M497,835L507,822M620,712L624,718M628,845L650,828" color={H} w={9} />
      <Sticks d="M592,810L598,840M540,870L545,866" color="#df1d18" w={10} /><circle cx="598" cy="840" r="11" fill="#df1d18" />
      <Sticks d="M570,820L575,855L560,866M610,860L635,842M925,870L940,868" w={13} />
    </g>

    <path d="M785,282L1103,489" stroke="#84dd84" strokeWidth="2.2" strokeDasharray="2.2 3.2" />
    <text x="928.5" y="389" fontSize="10.2" fontWeight="bold" fill="#090909" stroke="#090909" strokeWidth=".4" fontFamily="Liberation Sans, sans-serif">27.88 Å</text>

    <g transform={frame.axes} strokeLinecap="round">
      <path d="M1060,645L1112,638L1117,680L1066,690Z" fill="#aaa9aa" fillOpacity=".8" />
      <path d="M1103,590L1114,685" stroke="#5fb562" strokeOpacity=".85" strokeWidth="13" />
      <path d="M1018,698L1112,687" stroke="#6e6df5" strokeOpacity=".9" strokeWidth="13" />
      <path d="M1118,690L1127,700" stroke="#f66e6e" strokeWidth="13" />
      <circle cx="1103" cy="590" r="5" fill="#318a35" /><circle cx="1018" cy="698" r="5" fill="#2f2fd0" />
      <path d="M1075,690L1112,686" stroke="#5656a8" strokeWidth="12" />
    </g>
  </Scene>
);

/* ---------- RMSD plot: screen heights sampled per frame ---------- */
const rmsd = [902,655,611,611,594,556,543,558,528,518,500,527,491,504,492,488,479,474,480,492,458,483,473,498,480,483,486,460,495,485,463,424,471,455,443,447,459,474,471,440,430,428,432,456,447,421,455,457,457,429,447,431,443,468,455,462,483,469,459,477,458,452,443,455,462,447,459,462,467,447,453,440,426,413,431,435,432,443,445,472,448,440,438,444,459,453,459,468,468,450,462,447,428,422,410,407,430,453,447,450,432,450,447,440,443,426,429,453,438,435,450,419,438,444,416,420,435,426,395,423,426,402,423,414,429,415,402,408,416,386,408,417,432,416,402,414,420,438,426,429,434,431,423,414,426,438,398,414,429,427,434];
const RmsdPlot = () => {
  const pts = rmsd.map((y, i) => `${36 + 4 * (i + 1)},${(680 + y / 3 - 770).toFixed(1)}`).join(" ");
  const ticks = Array.from({ length: 15 }, (_, i) => (i + 1) * 10);
  return (
    <svg width="700" height="236" viewBox="0 2 700 236" fontFamily="Liberation Sans, sans-serif" fontSize="12" fill={c.muted}>
      {[3, 2, 1, 0].map((v, i) => {
        const y = [11, 77.5, 144.5, 211][i];
        return (
          <g key={v}>
            <text x="18" y={y + 4} textAnchor="middle">{v}</text>
            <path d={`M36.5,${y}H640`} stroke={v % 3 ? "#757780" : "#4c4d55"} strokeWidth={v % 3 ? 1 : 2} strokeDasharray={v ? "4 4" : "none"} />
          </g>
        );
      })}
      <path d="M36.5,11V212" stroke="#55565e" />
      {ticks.map(t => (
        <g key={t}>
          <path d={`M${36 + t * 4},11V211`} stroke="#4c4d55" strokeWidth="2" strokeDasharray="4 4" />
          <text x={36 + t * 4} y="229" textAnchor="middle">{t}</text>
        </g>
      ))}
      <polyline points={pts} fill="none" stroke="#ccd4e0" strokeWidth="2" strokeLinejoin="round" />
    </svg>
  );
};

/* ---------- small icons ---------- */
const SortIcon = () => (
  <svg width="6" height="9" viewBox="0 0 6 9" fill="#3b3b40"><path d="M3,0L5.5,3.5H.5ZM3,9L.5,5.5H5.5Z" /></svg>
);
const Hexagon = () => (
  <svg width="17" height="17" viewBox="0 0 24 24" fill="none" stroke={c.text} strokeWidth="1.6">
    <path d="M10,3.6L5.6,6M14,3.6L18.4,6M3.3,9.3V14.7M20.7,9.3V14.7M5.6,18L10,20.4M18.4,18L14,20.4" />
    {[[12, 2.6], [3.4, 7.2], [20.6, 7.2], [3.4, 16.8], [20.6, 16.8], [12, 21.4]].map(([x, y]) => <circle key={`${x}${y}`} cx={x} cy={y} r="2.1" />)}
  </svg>
);
const cube = "M21,16.5C21,16.88 20.79,17.21 20.47,17.38L12.57,21.82C12.41,21.94 12.21,22 12,22C11.79,22 11.59,21.94 11.43,21.82L3.53,17.38C3.21,17.21 3,16.88 3,16.5V7.5C3,7.12 3.21,6.79 3.53,6.62L11.43,2.18C11.59,2.06 11.79,2 12,2C12.21,2 12.41,2.06 12.57,2.18L20.47,6.62C20.79,6.79 21,7.12 21,7.5V16.5M12,4.15L6.04,7.5L12,10.85L17.96,7.5L12,4.15M5,15.91L11,19.29V12.58L5,9.21V15.91M19,15.91V9.21L13,12.58V19.29L19,15.91Z";
const Cube = () => <svg width="17" height="17" viewBox="0 0 24 24" fill={c.text}><path d={cube} /></svg>;
const CubeSend = () => (
  <svg width="17" height="17" viewBox="0 0 24 24" fill={c.text}>
    <path d="M0,6.5H9V8.3H0ZM3,11H8V12.8H3ZM5,15.5H8V17.3H5Z" />
    <path d={cube} transform="translate(7.2 3.1) scale(.74)" stroke={c.text} strokeWidth=".7" />
  </svg>
);
const Pointer = () => (
  <svg width="17" height="17" viewBox="0 0 24 24" fill="currentColor">
    <path d="M10.07,14.27C10.57,14.03 11.16,14.25 11.4,14.75L13.7,19.74L15.5,18.89L13.19,13.91C12.95,13.41 13.17,12.81 13.67,12.58L13.95,12.5L16.25,12.05L8,5.12V15.9L9.82,14.43L10.07,14.27M13.64,21.97C13.14,22.21 12.54,22 12.31,21.5L10.13,16.76L7.62,18.78C7.45,18.92 7.24,19 7,19A1,1 0 0,1 6,18V3A1,1 0 0,1 7,2C7.24,2 7.47,2.09 7.64,2.23L7.65,2.22L19.14,11.86C19.57,12.22 19.62,12.85 19.27,13.27C19.12,13.45 18.91,13.57 18.7,13.61L15.54,14.23L17.74,18.96C18,19.46 17.76,20.05 17.26,20.28L13.64,21.97Z" />
  </svg>
);
const AnimationStack = () => (
  <svg width="17" height="17" viewBox="0 0 24 24" fill={c.text}>
    <path d="M6,1H18V3.6H6ZM3.5,5H20.5V7.8H3.5Z" />
    <path fillRule="evenodd" d="M3,9.5H21Q23,9.5 23,11.5V21Q23,23 21,23H3Q1,23 1,21V11.5Q1,9.5 3,9.5ZM4,12.5V20.3H20V12.5Z" />
    <path d="M6,12H8V21H6ZM10.5,12.6L17.5,16.4L10.5,20.2Z" />
  </svg>
);

const sections = ["Add Trajectory", "Download Density", "Download File", "Open Files", "Download", "Load CellPack", "Load Genome 3D (G3D)"];
const states = [
  "Zika+EM", "P-450 Superposition & Validation", "NPC", "1RB8 Assembly Symmetry", "Fri, 10 Dec 2021 14:32:58 GMT",
  "Fri, 10 Dec 2021 19:49:33 GMT", "Fri, 10 Dec 2021 19:49:34 GMT", "Sun, 12 Dec 2021 13:31:06 GMT", "Sun, 12 Dec 2021 13:31:09 GMT",
  "Sun, 12 Dec 2021 23:17:46 GMT", "Sun, 12 Dec 2021 23:17:50 GMT", "Sun, 12 Dec 2021 23:17:52 GMT", "6mse",
  "Tue, 14 Dec 2021 07:03:05 GMT", "Wed, 15 Dec 2021 11:20:18 GMT", "Wed, 15 Dec 2021 17:16:33 GMT",
  "Wed, 15 Dec 2021 17:17:11 GMT", "Wed, 15 Dec 2021 17:17:42 GMT",
];
const tools: [string, string, React.ReactNode][] = [
  ["Structure", "#75418a", <Hexagon />],
  ["Measurements", "#2b3340", <MdDesignServices size={17} />],
  ["Superposition", "#2b3340", <MdFlipToFront size={17} />],
  ["Components", "#3a82c4", <Cube />],
  ["Export Animation", "#6b7c85", <AnimationStack />],
  ["Export Geometry", "#6b7c85", <CubeSend />],
];
const logs = ["Created Measurements in 0ms.", "Created Distance in 4ms.", "Created Distance in 78ms."];

export default function App() {
  return (
    <Shell>
      <Global />
      <Rail>
        <RailItem $active><MdOutlineHome /></RailItem>
        <RailItem><MdOutlineAccountTree /><Dot /></RailItem>
        <RailItem><MdOutlineSave /></RailItem>
        <RailItem><MdHelpOutline /></RailItem>
        <RailItem $last><MdTune /></RailItem>
      </Rail>

      <Left>
        <LeftBody>
          <Header><MdOutlineHome size={17} /><span>Home</span></Header>
          <Expander><MdArrowDropDown size={17} />Download Structure</Expander>
          <Field><Label>Source</Label><Value>PDB</Value></Field>
          <Field><Label>PDB Id(s)</Label><Value>1tqn</Value><More><MdMoreHoriz /></More></Field>
          <OptionRow><MdArrowRight size={13} />Options</OptionRow>
          <ApplyRow>
            <Reload><MdRefresh /></Reload>
            <ApplyButton><MdCheck size={17} />Apply</ApplyButton>
          </ApplyRow>
          <Group>{sections.map(s => <Expander key={s}><MdArrowRight size={17} />{s}</Expander>)}</Group>
          <Header $line="#3a82c4"><span>Remote States</span></Header>
          {states.map(s => <StateRow key={s}><span>{s}</span></StateRow>)}
        </LeftBody>
        <LeftScroll><Thumb $h={820} /></LeftScroll>
      </Left>

      <Center>
        <SeqBar>
          <b>Sequence of</b>
          <Pick>Protein<SortIcon /></Pick><Pick>Chain<SortIcon /></Pick><Pick>1: ACE<SortIcon /></Pick><Pick>A<SortIcon /></Pick>
          <SeqHelp><MdHelpOutline /></SeqHelp>
        </SeqBar>
        <Sequence><b>0</b>ACE</Sequence>
        <Viewport>
          <Molecule />
          <TopLeft>
            <Tile><MdOutlineSubscriptions /></Tile>
            <Player>
              <PlayerKey><MdSkipPrevious /></PlayerKey><PlayerKey><MdNavigateBefore /></PlayerKey><PlayerKey><MdNavigateNext /></PlayerKey>
              <span>Model 1 / 151</span>
            </Player>
          </TopLeft>
          <TopRight>
            <Tile $bright><MdAutorenew /></Tile>
            <Tile><MdOutlineCamera /></Tile>
            <div><Tile $bright><MdOutlineBuild /></Tile><Tile><MdTune /></Tile></div>
            <Tile><Pointer /></Tile>
          </TopRight>
        </Viewport>
        <PlotPanel>
          <PlotBody>
            <Rmsd><Label>Rmsd</Label><Toggle><MdCheck size={16} />On</Toggle></Rmsd>
            <OptionRow><MdArrowRight size={13} />Plot Options</OptionRow>
            <RmsdPlot />
          </PlotBody>
          <Bar $top={76}><Thumb $h={97} /></Bar>
        </PlotPanel>
        <LogPanel>
          <LogBody>
            {logs.map((l, i) => <LogRow key={l} $cut={i === 0}><Time>14:41:14</Time><Message>{l}</Message></LogRow>)}
          </LogBody>
          <Bar $top={32}><Thumb $h={34} /></Bar>
        </LogPanel>
      </Center>

      <Right>
        <Header><MdBuild size={17} /><span>Structure Tools</span></Header>
        {tools.map(([name, line, icon]) => <Tool key={name} $line={line}>{icon}{name}</Tool>)}
      </Right>

      <Highlight />
      <Cursor width="22" height="23" viewBox="0 0 22 23">
        <path d="M8,2C9.5,.5 11.5,1.5 11.5,3.5V6.5L19,8.5C20.5,9 21,10 20.8,11.5L20,21.5H10L7,18L1.5,11C2.5,9 5,10 7.5,12.5Z" fill="#4b4b4b" stroke="#fff" strokeWidth="1.2" />
      </Cursor>
    </Shell>
  );
}
